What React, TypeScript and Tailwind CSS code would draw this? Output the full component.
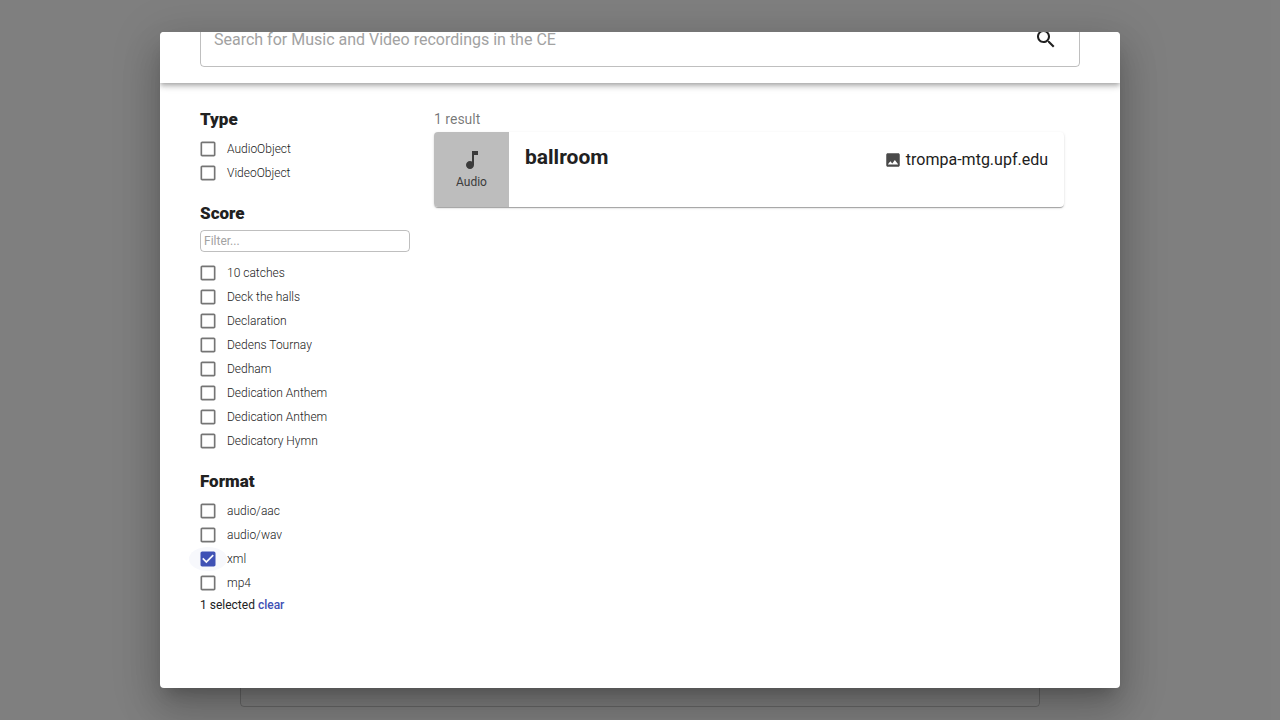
import { useState } from "react";

type FacetProps = {
  title: string;
  options: string[];
  filterable?: boolean;
  initial?: number[];
};

function CheckRow({
  label,
  checked,
  onChange,
}: {
  label: string;
  checked: boolean;
  onChange: () => void;
}) {
  return (
    <label className="-ml-[11px] flex h-6 cursor-pointer items-center">
      <span
        className={
          checked
            ? "relative flex h-6 w-[38px] shrink-0 items-center justify-center rounded-[50%] bg-[#3f51b5]/4"
            : "relative flex h-6 w-[38px] shrink-0 items-center justify-center rounded-[50%]"
        }
      >
        <input
          type="checkbox"
          checked={checked}
          onChange={onChange}
          className="absolute inset-0 h-full w-full cursor-pointer opacity-0"
        />
        <svg
          viewBox="0 0 24 24"
          aria-hidden="true"
          className={checked ? "size-5 fill-[#3f51b5]" : "size-5 fill-black/54"}
        >
          {checked ? (
            <path d="M19 3H5c-1.11 0-2 .9-2 2v14c0 1.1.89 2 2 2h14c1.11 0 2-.9 2-2V5c0-1.1-.89-2-2-2zm-9 14l-5-5 1.41-1.41L10 14.17l7.59-7.59L19 8l-9 9z" />
          ) : (
            <path d="M19 5v14H5V5h14m0-2H5c-1.1 0-2 .9-2 2v14c0 1.1.9 2 2 2h14c1.1 0 2-.9 2-2V5c0-1.1-.9-2-2-2z" />
          )}
        </svg>
      </span>
      <span className="text-xs font-light">{label}</span>
    </label>
  );
}

function Facet({ title, options, filterable = false, initial = [] }: FacetProps) {
  const [selected, setSelected] = useState<number[]>(initial);
  const [filter, setFilter] = useState("");

  const toggle = (index: number) =>
    setSelected((current) =>
      current.includes(index) ? current.filter((i) => i !== index) : [...current, index],
    );

  return (
    <section>
      <h2 className="text-[17px] leading-6 font-black">{title}</h2>
      {filterable && (
        <input
          type="text"
          aria-label={`Filter ${title}`}
          placeholder="Filter..."
          value={filter}
          onChange={(e) => setFilter(e.target.value)}
          className="mt-[5px] mb-[9px] block h-[22px] w-full rounded border border-black/25 px-[3px] text-xs placeholder:text-[#a2a2a2] focus:outline-none"
        />
      )}
      <div className={filterable ? "" : "pt-1.5"}>
        {options.map((option, index) =>
          option.toLowerCase().includes(filter.toLowerCase()) ? (
            <CheckRow
              key={index}
              label={option}
              checked={selected.includes(index)}
              onChange={() => toggle(index)}
            />
          ) : null,
        )}
      </div>
      {selected.length > 0 && (
        <p className="text-xs leading-5">
          {selected.length} selected{" "}
          <button
            type="button"
            onClick={() => setSelected([])}
            className="cursor-pointer font-medium text-[#3f51b5]"
          >
            clear
          </button>
        </p>
      )}
    </section>
  );
}

function ResultCard() {
  return (
    <article className="flex h-[75px] overflow-hidden rounded bg-white shadow-[0px_2px_1px_-1px_rgba(0,0,0,0.2),0px_1px_1px_0px_rgba(0,0,0,0.14),0px_1px_3px_0px_rgba(0,0,0,0.12)]">
      <div className="flex w-[75px] shrink-0 flex-col items-center justify-center bg-[#bdbdbd] text-[#3b3b3b]">
        <svg viewBox="0 0 24 24" aria-hidden="true" className="size-6 fill-current">
          <path d="M12 3v10.55c-.59-.34-1.27-.55-2-.55-2.21 0-4 1.79-4 4s1.79 4 4 4 4-1.79 4-4V7h4V3h-6z" />
        </svg>
        <span className="text-xs leading-5">Audio</span>
      </div>
      <div className="flex flex-1 items-start justify-between px-4 pt-2">
        <h3 className="text-[21px] leading-[34px] font-bold">ballroom</h3>
        <p className="flex items-center gap-1 pt-2 text-base leading-6">
          <svg viewBox="0 0 24 24" aria-hidden="true" className="size-[18px] fill-[#4a4a4a]">
            <path d="M21 19V5c0-1.1-.9-2-2-2H5c-1.1 0-2 .9-2 2v14c0 1.1.9 2 2 2h14c1.1 0 2-.9 2-2zM8.5 13.5l2.5 3.01L14.5 12l4.5 6H5l3.5-4.5z" />
          </svg>
          trompa-mtg.upf.edu
        </p>
      </div>
    </article>
  );
}

export default function App() {
  return (
    <div className="relative h-screen overflow-hidden bg-white font-[Roboto,sans-serif] text-[#212121]">
      <div className="mx-auto h-full max-w-[800px] pt-16 pb-[13px]">
        <div className="h-full rounded border border-black/20" />
      </div>

      <div className="absolute inset-0 flex justify-center bg-black/50 p-8">
        <div
          role="dialog"
          aria-modal="true"
          aria-label="Search recordings"
          className="flex w-full max-w-[960px] flex-col overflow-hidden rounded bg-white shadow-[0px_11px_15px_-7px_rgba(0,0,0,0.2),0px_24px_38px_3px_rgba(0,0,0,0.14),0px_9px_46px_8px_rgba(0,0,0,0.12)]"
        >
          <header className="-mt-[37px] bg-white px-10 py-4 shadow-[0px_2px_4px_-1px_rgba(0,0,0,0.2),0px_4px_5px_0px_rgba(0,0,0,0.14),0px_1px_10px_0px_rgba(0,0,0,0.12)]">
            <form
              role="search"
              onSubmit={(e) => e.preventDefault()}
              className="flex h-14 items-center rounded border border-black/25 pr-[21px] pl-[13px]"
            >
              <input
                type="text"
                aria-label="Search recordings"
                placeholder="Search for Music and Video recordings in the CE"
                className="h-full min-w-0 flex-1 text-base placeholder:text-[#a2a2a2] focus:outline-none"
              />
              <button type="submit" aria-label="Search" className="cursor-pointer">
                <svg viewBox="0 0 24 24" aria-hidden="true" className="size-6 fill-[#212121]">
                  <path d="M15.5 14h-.79l-.28-.27C15.41 12.59 16 11.11 16 9.5 16 5.91 13.09 3 9.5 3S3 5.91 3 9.5 5.91 16 9.5 16c1.61 0 3.09-.59 4.23-1.57l.27.28v.79l5 4.99L20.49 19l-4.99-5zm-6 0C7.01 14 5 11.99 5 9.5S7.01 5 9.5 5 14 7.01 14 9.5 11.99 14 9.5 14z" />
                </svg>
              </button>
            </form>
          </header>

          <div className="flex flex-1 gap-6 pt-6 pr-14 pl-10">
            <aside className="flex w-[210px] shrink-0 flex-col gap-4">
              <Facet title="Type" options={["AudioObject", "VideoObject"]} />
              <Facet
                title="Score"
                filterable
                options={[
                  "10 catches",
                  "Deck the halls",
                  "Declaration",
                  "Dedens Tournay",
                  "Dedham",
                  "Dedication Anthem",
                  "Dedication Anthem",
                  "Dedicatory Hymn",
                ]}
              />
              <Facet
                title="Format"
                options={["audio/aac", "audio/wav", "xml", "mp4"]}
                initial={[2]}
              />
            </aside>
            <main className="min-w-0 flex-1">
              <p className="pb-px text-sm leading-6 text-black/54">1 result</p>
              <ResultCard />
            </main>
          </div>
        </div>
      </div>
    </div>
  );
}
